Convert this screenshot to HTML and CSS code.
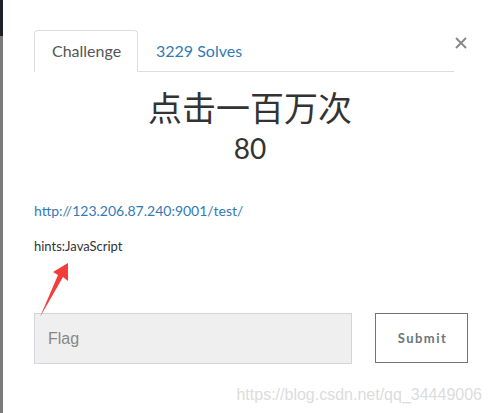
FILE: index.html
```html
<!DOCTYPE html>
<html>
<head>
<meta charset="utf-8">
<link rel="stylesheet" href="styles.css">
</head>
<body>
<div class="page">
  <div class="edge"><div class="edge-top"></div><div class="edge-bottom"></div></div>
  <div class="modal">
    <div class="header">
      <ul class="tabs">
        <li class="tab active">Challenge</li>
        <li class="tab"><a href="#">3229 Solves</a></li>
      </ul>
      <button class="close" aria-label="Close">
        <svg width="12" height="12" viewBox="0 0 12 12"><path d="M1 1L11 11M11 1L1 11" stroke="#8a8a8a" stroke-width="2"/></svg>
      </button>
    </div>
    <h1 class="title">点击一百万次</h1>
    <h2 class="value">80</h2>
    <p class="link"><a href="#">http://123.206.87.240:9001/test/</a></p>
    <p class="hint">hints:JavaScript</p>
    <form class="flag-form">
      <input class="flag" type="text" placeholder="Flag">
      <button class="submit" type="button">Submit</button>
    </form>
    <div class="watermark">https://blog.csdn.net/qq_34449006</div>
  </div>
  <svg class="arrow" width="495" height="413" viewBox="0 0 495 413">
    <polygon points="68,263 68,281 63,277 40,317 58,275 53,272" fill="#f33c3c"/>
  </svg>
</div>
</body>
</html>
```
FILE: styles.css
```css
* { box-sizing: border-box; }
html, body { margin: 0; padding: 0; background: #fff; }
body { font-family: Lato, "Noto Sans", sans-serif; color: #333; }
.page { position: relative; display: flex; width: 495px; height: 413px; overflow: hidden; }
.edge { flex: none; width: 3px; display: flex; flex-direction: column; }
.edge-top { height: 36px; background: #1e2226; }
.edge-bottom { flex: 1; background: #7a7a7a; }
.modal { flex: 1 1 0; min-width: 0; padding: 30px 29px 0 31px; }
.header { display: flex; align-items: flex-start; }
.tabs { list-style: none; margin: 0; padding: 0; display: flex; flex: none; width: 420px; border-bottom: 1px solid #ddd; height: 42px; }
.tab { font-size: 16px; padding: 0 18px 0 17px; line-height: 40px; margin-bottom: -1px; border: 1px solid transparent; border-radius: 4px 4px 0 0; }
.tab.active { color: #555; border-color: #ddd; border-bottom-color: #fff; background: #fff; width: 104px; height: 42px; }
.tab a { color: #337ab7; text-decoration: none; }
.close { flex: none; margin: 7px 0 0 1px; padding: 0; border: 0; background: none; width: 12px; height: 12px; display: flex; }
.title { margin: 16px 0 0 0; text-align: center; font-family: Lato, "Noto Sans CJK SC", sans-serif; font-weight: 400; font-size: 34px; line-height: 40px; color: #333; }
.value { margin: 4px 0 0 0; text-align: center; font-weight: 400; font-size: 28px; line-height: 33px; color: #333; }
.link { margin: 36px 0 0 0; font-size: 14px; line-height: 20px; }
.link a { color: #337ab7; text-decoration: none; }
.hint { margin: 15px 0 0 0; font-size: 13px; line-height: 20px; color: #333; }
.flag-form { display: flex; margin-top: 57px; gap: 23px; }
.flag { flex: none; width: 318px; height: 51px; background: #efefef; border: 1px solid #d2d5da; padding: 0 13px; font-family: "Liberation Sans", Arial, sans-serif; font-size: 16px; color: #555; outline: none; }
.flag::placeholder { color: #888; }
.submit { flex: none; width: 93px; height: 50px; background: #fff; border: 1px solid #6c757d; font-family: Lato, sans-serif; font-weight: 700; font-size: 13px; letter-spacing: 1.5px; color: #6c757d; padding: 0 0 0 2px; }
.watermark { margin: 21px -16px 0 0; text-align: right; font-family: "Liberation Sans", Arial, sans-serif; font-size: 16px; line-height: 20px; color: #dcdcdc; white-space: nowrap; }
.arrow { position: absolute; left: 0; top: 0; pointer-events: none; }
```
